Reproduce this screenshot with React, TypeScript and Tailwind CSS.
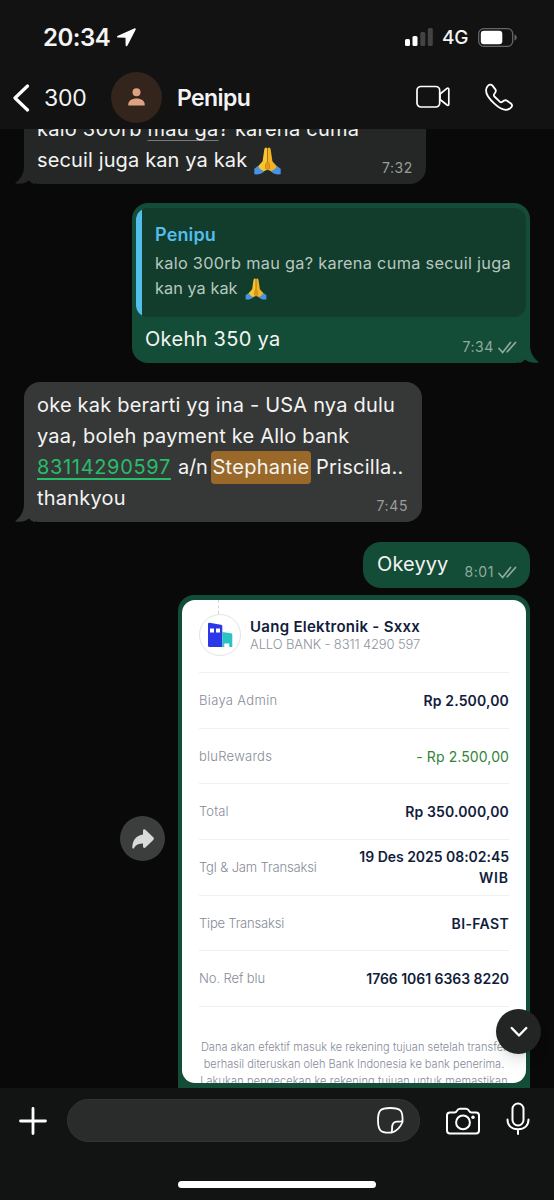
import type { ReactNode } from "react";

const rows = [
  { label: "Biaya Admin", value: "Rp 2.500,00", labelStyle: "tracking-[0.33px]", valueStyle: "tracking-[0.15px]" },
  { label: "bluRewards", value: "- Rp 2.500,00", green: true, labelStyle: "tracking-[0.25px]", valueStyle: "tracking-[0.1px]" },
  { label: "Total", value: "Rp 350.000,00", labelStyle: "tracking-[0.1px]", valueStyle: "tracking-[0.15px]" },
  { label: "Tgl & Jam Transaksi", value: "19 Des 2025 08:02:45", extra: "WIB", labelStyle: "tracking-[-0.15px]", valueStyle: "tracking-[-0.03px]" },
  { label: "Tipe Transaksi", value: "BI-FAST", labelStyle: "tracking-[-0.2px]", valueStyle: "tracking-[0.35px]" },
  { label: "No. Ref blu", value: "1766 1061 6363 8220", labelStyle: "tracking-[-0.1px]", valueStyle: "tracking-[-0.05px]" },
];

function Pray({ className }: { className: string }) {
  return (
    <svg viewBox="0 0 27 28" className={className} role="img" aria-label="folded hands">
      <path d="M13.3 1.200c-1.500-1.500-2.700-.4-3 1.200L8.600 14.200 3.500 20l4.100 5.200 5.700-2.400z" fill="#f9c52f" />
      <path d="M13.700 1.200c1.500-1.500 2.700-.4 3 1.200l1.700 11.800L23.500 20l-4.100 5.200-5.700-2.400z" fill="#f3b324" />
      <path d="M13.500 2v13M11.500 17.500l2-3 2 3v4l-2 1.500-2-1.500z" fill="#e09a1c" stroke="#b8741a" strokeWidth=".6" />
      <path d="M4 19c1.400 2.500 3.200 4.200 6.300 5.200C7.500 26.900 4.200 27.800.3 27.300v-5.500z" fill="#4a92e0" />
      <path d="M23 19c-1.400 2.500-3.200 4.200-6.300 5.200 2.800 2.700 6.100 3.600 10 3.100v-5.500z" fill="#4a92e0" />
    </svg>
  );
}

function Checks() {
  return (
    <svg viewBox="0 0 19 13" className="h-[13px] w-[19px]" fill="none" stroke="currentColor" strokeWidth="1.700" strokeLinecap="round">
      <path d="M1 7.500 4.600 11.500 12.500 1.500M9.200 10.800 17.500 1.500" />
    </svg>
  );
}

function Tail({ className }: { className: string }) {
  return (
    <svg viewBox="0 0 20 30" className={className}>
      <path d="M9 0v12c0 7-3 13-9 17.200 5 1.300 10 .3 14-2.700 2 2 4 3.500 6 3.500V0z" fill="currentColor" />
    </svg>
  );
}

function Time({ children, sent }: { children: ReactNode; sent?: boolean }) {
  return (
    <div className={sent ? "flex items-center gap-1 text-[14px] leading-4 tracking-[0.6px] text-[#91ab9f]" : "text-[14px] leading-4 tracking-[0.6px] text-[#9b9d9c]"}>
      <span>{children}</span>
      {sent && <Checks />}
    </div>
  );
}

function Header() {
  return (
    <header className="h-[129px] shrink-0 bg-[#121212]">
      <div className="flex h-[65px] items-center pt-[9px] pr-[37px] pl-[43px]">
        <span className="w-[68px] pt-[2px] text-[24px] font-semibold tracking-[-0.5px]">20:34</span>
        <svg viewBox="0 0 19 19" className="ml-[6px] h-[19px] w-[19px]">
          <path d="M17.200.4.900 7.700c-1.500.7-1 1.900.3 1.900l7.300.1.100 7.200c0 1.500 1.400 1.700 2 .4L18.600 1.800c.5-1.200-.3-1.900-1.400-1.400z" fill="white" />
        </svg>
        <div className="ml-auto flex items-center">
          <svg viewBox="0 0 28 18" className="h-[18px] w-[28px]">
            <rect x="0" y="11" width="5" height="7" rx="1.500" fill="white" />
            <rect x="7.500" y="8" width="5" height="10" rx="1.500" fill="white" />
            <rect x="15.300" y="4" width="5" height="14" rx="1.500" fill="#434343" />
            <rect x="22.800" y="0" width="5" height="18" rx="1.500" fill="#434343" />
          </svg>
          <span className="ml-[9px] w-[27px] pt-[2px] text-[19px] font-medium tracking-[-0.2px]">4G</span>
          <svg viewBox="0 0 39 19" className="ml-[9px] h-[19px] w-[39px]">
            <rect x=".7" y=".7" width="34" height="17.600" rx="5" fill="none" stroke="#666" strokeWidth="1.300" />
            <rect x="2.800" y="2.800" width="21.500" height="13.400" rx="3" fill="white" />
            <path d="M36.500 6.500c3 1 3 5 0 6z" fill="#666" />
          </svg>
        </div>
      </div>
      <div className="flex h-[64px] items-center pl-[13px]">
        <svg viewBox="0 0 17 28" className="mt-[2px] h-[28px] w-[17px]" fill="none" stroke="white" strokeWidth="3.200" strokeLinecap="round" strokeLinejoin="round">
          <path d="M14.500 2 2 14l12.500 12" />
        </svg>
        <span className="ml-[14px] w-[44px] pt-[2px] text-[23px] tracking-[-0.2px]">300</span>
        <div className="ml-[23px] flex h-[51px] w-[51px] items-center justify-center rounded-full bg-[#33241c]">
          <svg viewBox="0 0 17 18" className="h-[18px] w-[17px]" fill="#dda282">
            <circle cx="8.500" cy="4.200" r="4" />
            <path d="M.3 17.500v-1.200c0-3.500 3.400-5.800 8.200-5.800s8.200 2.300 8.200 5.800v1.200z" />
          </svg>
        </div>
        <h1 className="ml-[15px] pt-[2px] text-[23px] font-semibold tracking-[-0.6px]">Penipu</h1>
        <svg viewBox="0 0 34 24" className="ml-auto h-[24px] w-[34px]" fill="none" stroke="white" strokeWidth="1.700" strokeLinejoin="round">
          <rect x="1" y="1.500" width="22.700" height="20.500" rx="4" />
          <path d="m24 9 7-5.600c.9-.6 1.800-.2 1.800.8v15c0 1-.9 1.400-1.800.8L24 14.500z" />
        </svg>
        <svg viewBox="0 0 28 28" className="mr-[41px] ml-[35px] h-[28px] w-[28px]" fill="none" stroke="white" strokeWidth="1.800" strokeLinejoin="round">
          <path d="M2.200 3.700C3.800 1.500 5.900.8 7.500 2.600l3 4c.9 1.300.5 2.300-1.200 4.400-.7.900-.6 1.600.1 2.500l5.400 5.200c1 .8 1.700.8 2.500.1 2-1.700 3.100-2 4.400-1.200l4.200 2.900c2 1.600 1.300 3.500-1 5.100-4 2.900-9.300.9-15.500-4.900C2.500 14.400-.6 8 2.200 3.700z" />
        </svg>
      </div>
    </header>
  );
}

function Receipt() {
  return (
    <div className="mt-[7px] mr-6 h-[500px] w-[352px] shrink-0 self-end rounded-t-[16px] bg-[#144d37] px-1 pt-[5px]">
      <div className="h-[483px] overflow-hidden rounded-[13px] bg-white px-[17px] text-[#111d3c]">
        <div className="flex h-[73px] flex-col border-b border-[#eeeff1]">
          <div className="ml-[19px] h-[14px] w-0 border-l border-dashed border-[#d6d6d6]" />
          <div className="flex items-center">
            <div className="flex h-[42px] w-[42px] items-center justify-center rounded-full border border-[#e4e4e4]">
              <svg viewBox="0 0 26 26" className="h-[26px] w-[26px]">
                <path d="M2.500.8 14 2.700q1.300.3 1.300 1.500V25H2.500Q1 25 1 23.500V2Q1 .7 2.500.8z" fill="#2c37e8" />
                <path d="m15.300 10 8.700 1.300q1.300.3 1.300 1.500V25h-3v-3.500h-5V25h-2z" fill="#29c4c2" />
                <path d="M3 6.500h4v4H3zM9 6.500h4v4H9z" fill="white" />
              </svg>
            </div>
            <div className="ml-[9px] whitespace-nowrap">
              <p className="text-[15px] leading-[18px] font-semibold tracking-[0.28px]">Uang Elektronik - Sxxx</p>
              <p className="text-[13px] leading-[16px] font-light tracking-[-0.12px] text-[#8f939c]">ALLO BANK - 8311 4290 597</p>
            </div>
          </div>
        </div>
        {rows.map((row) => (
          <div key={row.label} className="flex h-[55.700px] items-center justify-between border-b border-[#eeeff1] whitespace-nowrap">
            <span className={`text-[13px] font-light text-[#868b97] ${row.labelStyle}`}>{row.label}</span>
            <div className="text-right text-[14px] leading-[21px]">
              <p className={`${row.green ? "text-[#318438]" : "font-semibold"} ${row.valueStyle}`}>{row.value}</p>
              {row.extra && <p className="font-semibold tracking-[0.9px]">{row.extra}</p>}
            </div>
          </div>
        ))}
        <div className="mt-[32px] flex flex-col items-center text-[11px] leading-[16.700px] font-light whitespace-nowrap text-[#868b97]">
          <p className="tracking-[0.03px]">Dana akan efektif masuk ke rekening tujuan setelah transfer</p>
          <p className="tracking-[0px]">berhasil diteruskan oleh Bank Indonesia ke bank penerima.</p>
          <p className="tracking-[0.1px]">Lakukan pengecekan ke rekening tujuan untuk memastikan</p>
        </div>
      </div>
    </div>
  );
}

function Chat() {
  return (
    <main className="relative h-[959px] shrink-0 overflow-hidden bg-[#090909] text-[20px] leading-[31px] whitespace-nowrap">
      <div className="flex flex-col">
        <div className="relative ml-6 h-[55px] w-[402px] rounded-b-[16px] bg-[#242726] px-[13px]">
          <Tail className="absolute bottom-0 -left-[9px] h-[30px] w-[20px] text-[#242726]" />
          <div className="relative -mt-[15px]">
            <p className="tracking-[0.23px]">kalo 300rb <span className="underline decoration-[#777] decoration-1 underline-offset-4">mau ga</span>? karena cuma</p>
            <p className="flex items-center tracking-[0.13px]">secuil juga kan ya kak <Pray className="ml-[7px] h-[28px] w-[27px]" /></p>
          </div>
          <div className="absolute right-[13px] bottom-[8px]"><Time>7:32</Time></div>
        </div>

        <div className="relative mt-[19px] mr-6 h-[160px] w-[398px] self-end rounded-[16px] bg-[#144d37] px-[4px] pt-[5px]">
          <Tail className="absolute -right-[9px] bottom-0 h-[30px] w-[20px] -scale-x-100 text-[#144d37]" />
          <div className="flex h-[109px] overflow-hidden rounded-[12px] bg-[#123d2c]">
            <div className="w-[6px] bg-[#53bdeb]" />
            <div className="pt-[14px] pl-[13px] text-[16.300px] leading-[25px] text-[#b8c8c0]">
              <p className="mb-[4px] text-[18px] font-semibold tracking-[0.15px] text-[#53bdeb]">Penipu</p>
              <p className="tracking-[0.3px]">kalo 300rb mau ga? karena cuma secuil juga</p>
              <p className="flex items-center tracking-[0.05px]">kan ya kak <Pray className="ml-[7px] h-[22px] w-[22px]" /></p>
            </div>
          </div>
          <div className="flex justify-between pt-[7px] pr-[9px] pl-[9px]">
            <p className="tracking-[0.3px]">Okehh 350 ya</p>
            <div className="pt-[15px]"><Time sent>7:34</Time></div>
          </div>
        </div>

        <div className="relative mt-[19px] ml-6 h-[140px] w-[398px] rounded-[16px] bg-[#363837] px-[13px] pt-[8px]">
          <Tail className="absolute bottom-0 -left-[9px] h-[30px] w-[20px] text-[#363837]" />
          <div className="relative">
            <p className="tracking-[0.2px]">oke kak berarti yg ina - USA nya dulu</p>
            <p className="tracking-[0.2px]">yaa, boleh payment ke Allo bank</p>
            <p className="flex">
              <span className="w-[134px] tracking-[0.66px] text-[#28bd6b] underline decoration-[1.500px] underline-offset-4">83114290597</span>
              <span className="ml-[7px] w-[28px] tracking-[-0.2px]">a/n</span>
              <span className="-mt-px ml-[5px] flex h-[33px] w-[100px] items-center justify-center rounded-[4px] bg-[#9a692a] tracking-[0.3px]">Stephanie</span>
              <span className="ml-[5px] tracking-[0.25px]">Priscilla..</span>
            </p>
            <p className="-mt-[1px] tracking-[0.2px]">thankyou</p>
          </div>
          <div className="absolute right-[14px] bottom-[8px]"><Time>7:45</Time></div>
        </div>

        <div className="mt-[20px] mr-6 flex h-[46px] w-[167px] justify-between self-end rounded-[18px] bg-[#144d37] pt-[7px] pr-[13px] pl-[14px]">
          <p className="tracking-[0.1px]">Okeyyy</p>
          <div className="pt-[15px]"><Time sent>8:01</Time></div>
        </div>
        <Receipt />
      </div>

      <button className="absolute top-[687px] left-[120px] flex h-[45px] w-[45px] items-center justify-center rounded-full bg-[#3c3d3d]">
        <svg viewBox="0 0 22 20" className="h-[20px] w-[22px]">
          <path d="M11 2.200c0-2 1.300-2.500 2.700-1.200l7.300 7c1.200 1.100 1.200 2.100 0 3.200l-7.300 7c-1.400 1.300-2.700.8-2.700-1.200v-2.500c-4.500 0-7 1.200-8.800 4.300-.8 1.400-2 1-1.900-.8C.8 11 4.200 6.500 11 5.500z" fill="#d9dadb" />
        </svg>
      </button>
      <button className="absolute top-[880px] left-[496px] flex h-[45px] w-[45px] items-center justify-center rounded-full bg-[#232424] shadow-lg">
        <svg viewBox="0 0 18 12" className="h-[12px] w-[18px]" fill="none" stroke="white" strokeWidth="2.400" strokeLinecap="round" strokeLinejoin="round">
          <path d="m1.700 2 7.300 7.500L16.300 2" />
        </svg>
      </button>
    </main>
  );
}

function Composer() {
  return (
    <footer className="flex h-[112px] shrink-0 flex-col items-center bg-[#121313]">
      <div className="flex h-[65px] w-full items-center pl-[19px]">
        <svg viewBox="0 0 28 28" className="h-[28px] w-[28px]" stroke="white" strokeWidth="2.800" strokeLinecap="round">
          <path d="M14 1.500v25M1.500 14h25" />
        </svg>
        <div className="ml-[20px] flex h-[43px] w-[353px] items-center justify-end rounded-full border border-[#333535] bg-[#2a2b2b] pr-[15px]">
          <svg viewBox="0 0 27 27" className="h-[27px] w-[27px]" fill="none" stroke="white" strokeWidth="1.800" strokeLinejoin="round">
            <path d="M15 25.500c-5.500.5-9.400 0-11.600-2.200C1.200 21.100 1 17.800 1 13.300 1 8.800 1.200 5.600 3.400 3.400S8.800 1 13.300 1c4.500 0 7.800.2 10 2.400s2.500 6.400 2.200 11.600C23.500 20 20 24 15 25.500z" />
            <path d="M14.500 25.500c1-2.500.3-4.300.7-6.500.5-2.500 2.100-4 4.600-4.300 2-.2 3.900.2 5.700-.7" />
          </svg>
        </div>
        <svg viewBox="0 0 34 28" className="ml-[26px] h-[28px] w-[34px]" fill="none" stroke="white" strokeWidth="2" strokeLinejoin="round">
          <path d="M4 5.500h4.500c1.200 0 1.800-.5 2.500-1.700.8-1.500 1.500-2 3-2h6c1.500 0 2.200.5 3 2 .7 1.200 1.300 1.700 2.500 1.700H30c2 0 3 1 3 3v15c0 2-1 3-3 3H4c-2 0-3-1-3-3v-15c0-2 1-3 3-3z" />
          <circle cx="17" cy="15.400" r="6.900" />
          <circle cx="27" cy="10.200" r="1.700" fill="white" stroke="none" />
        </svg>
        <svg viewBox="0 0 24 34" className="-mt-[4px] ml-[26px] h-[34px] w-[24px]" fill="none" stroke="white" strokeWidth="2" strokeLinecap="round">
          <rect x="6.500" y="1.500" width="11" height="22" rx="5.500" />
          <path d="M1.500 17.500c0 6 4 9.700 10.500 9.700s10.500-3.700 10.500-9.700M12 27.500V32" />
        </svg>
      </div>
      <div className="mt-[28px] h-[7px] w-[198px] rounded-full bg-white" />
    </footer>
  );
}

export default function App() {
  return (
    <div className="flex h-[1200px] w-[554px] flex-col overflow-hidden bg-[#090909] font-['Inter','Liberation_Sans',sans-serif] text-[#f3f4f3]">
      <Header />
      <Chat />
      <Composer />
    </div>
  );
}
